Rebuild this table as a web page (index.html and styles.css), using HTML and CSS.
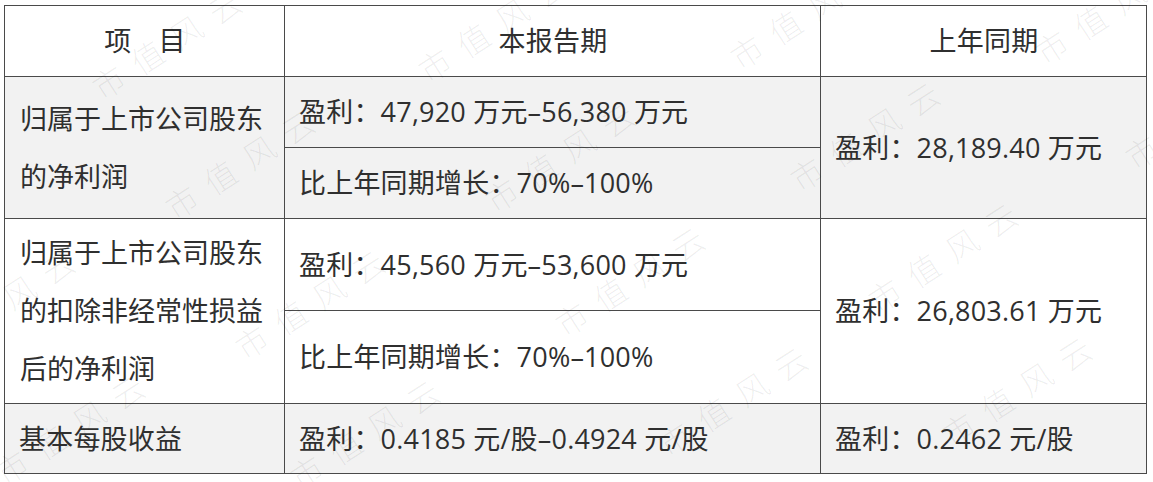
FILE: index.html
```html
<!DOCTYPE html>
<html lang="zh-CN">
<head>
<meta charset="utf-8">
<title>业绩预告</title>
<link rel="stylesheet" href="styles.css">
</head>
<body>
<div class="page">
  <table class="report">
    <colgroup>
      <col class="c-item">
      <col class="c-now">
      <col class="c-last">
    </colgroup>
    <tr class="r-head">
      <td class="center">项　目</td>
      <td class="center">本报告期</td>
      <td class="center">上年同期</td>
    </tr>
    <tr class="r-a shade">
      <td rowspan="2" class="multi">归属于上市公司股东<br>的净利润</td>
      <td>盈利：47,920 万元–56,380 万元</td>
      <td rowspan="2">盈利：28,189.40 万元</td>
    </tr>
    <tr class="r-a shade">
      <td>比上年同期增长：70%–100%</td>
    </tr>
    <tr class="r-b">
      <td rowspan="2" class="multi">归属于上市公司股东<br>的扣除非经常性损益<br>后的净利润</td>
      <td>盈利：45,560 万元–53,600 万元</td>
      <td rowspan="2">盈利：26,803.61 万元</td>
    </tr>
    <tr class="r-b2">
      <td>比上年同期增长：70%–100%</td>
    </tr>
    <tr class="r-last shade">
      <td>基本每股收益</td>
      <td>盈利：0.4185 元/股–0.4924 元/股</td>
      <td>盈利：0.2462 元/股</td>
    </tr>
  </table>

  <div class="wm" aria-hidden="true">
    <span class="mark" style="left:92px;top:65px">市值风云</span>
    <span class="mark" style="left:418px;top:48px">市值风云</span>
    <span class="mark" style="left:730px;top:35px">市值风云</span>
    <span class="mark" style="left:1035px;top:30px">市值风云</span>
    <span class="mark" style="left:165px;top:185px">市值风云</span>
    <span class="mark" style="left:485px;top:178px">市值风云</span>
    <span class="mark" style="left:790px;top:157px">市值风云</span>
    <span class="mark" style="left:1125px;top:135px">市值风云</span>
    <span class="mark" style="left:-75px;top:325px">市值风云</span>
    <span class="mark" style="left:235px;top:325px">市值风云</span>
    <span class="mark" style="left:555px;top:302px">市值风云</span>
    <span class="mark" style="left:868px;top:278px">市值风云</span>
    <span class="mark" style="left:-5px;top:450px">市值风云</span>
    <span class="mark" style="left:290px;top:455px">市值风云</span>
    <span class="mark" style="left:658px;top:422px">市值风云</span>
    <span class="mark" style="left:942px;top:412px">市值风云</span>
  </div>
</div>
</body>
</html>
```

FILE: styles.css
```css
html, body {
  margin: 0;
  padding: 0;
  background: #ffffff;
}

.page {
  position: relative;
  width: 1153px;
  height: 482px;
  overflow: hidden;
  padding: 5px 0 0 4px;
  box-sizing: border-box;
  font-family: "Open Sans", "Noto Sans CJK SC", sans-serif;
  color: #2f2f2f;
}

.report {
  border-collapse: collapse;
  table-layout: fixed;
  width: 1142px;
  font-size: 27px;
}

.c-item { width: 280px; }
.c-now { width: 536px; }
.c-last { width: 326px; }

.report td {
  border: 1px solid #4a4a4a;
  padding: 0 13px 0 14px;
  vertical-align: middle;
  line-height: 40px;
  white-space: nowrap;
  letter-spacing: 0.2px;
}

.report td.center {
  text-align: center;
}

.report td.multi {
  line-height: 58px;
  padding-left: 15px;
  letter-spacing: 0;
}

.shade td {
  background: #f2f2f2;
}

.r-head { height: 71px; }
.r-a { height: 71px; }
.r-b { height: 92px; }
.r-b2 { height: 93px; }
.r-last { height: 70px; }

.wm {
  position: absolute;
  inset: 0;
  pointer-events: none;
}

.mark {
  position: absolute;
  font-family: "Noto Sans CJK SC", sans-serif;
  font-weight: 300;
  font-size: 32px;
  line-height: 32px;
  letter-spacing: 14px;
  color: rgba(0, 0, 0, 0.065);
  white-space: nowrap;
  transform-origin: 16px 16px;
  transform: rotate(-33deg);
}
```
